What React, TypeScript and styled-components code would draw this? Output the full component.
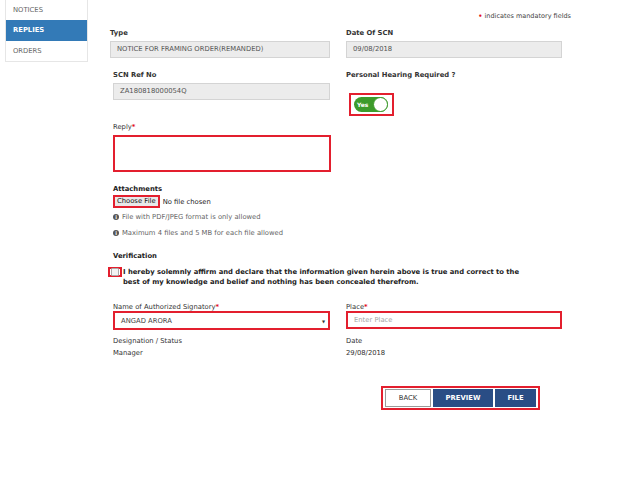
import React from 'react';
import styled, { createGlobalStyle } from 'styled-components';

const GlobalStyle = createGlobalStyle`
  html, body {
    margin: 0;
    padding: 0;
    background: #fff;
  }
  body {
    font-family: "DejaVu Sans", Verdana, sans-serif;
    font-size: 6.8px;
    color: #333;
  }
`;

const Page = styled.div`
  display: flex;
  align-items: flex-start;
  padding-left: 5px;
  width: 627px;
  height: 496px;
  box-sizing: border-box;
`;

/* menu on the left side */
const SideNav = styled.nav`
  width: 81px;
  border: 1px solid #e6e6e6;
  border-top: none;
  display: flex;
  flex-direction: column;
`;

const NavItem = styled.div<{ $active?: boolean }>`
  height: 20.3px;
  line-height: 20.3px;
  padding-left: 7px;
  font-size: 6.8px;
  color: ${p => (p.$active ? '#fff' : '#666')};
  background: ${p => (p.$active ? '#337ab7' : '#fff')};
  font-weight: ${p => (p.$active ? 'bold' : 'normal')};
`;

const Form = styled.form`
  margin-left: 22px;
  width: 461px;
  display: flex;
  flex-direction: column;
`;

const Note = styled.div`
  margin-top: 12px;
  height: 8px;
  text-align: right;
  font-size: 6.5px;
  color: #444;
  line-height: 8px;
`;

const Star = styled.span`
  color: #e3101e;
  font-weight: bold;
`;

const Row = styled.div<{ $top: number }>`
  display: grid;
  grid-template-columns: 220px 216px;
  column-gap: 16px;
  margin-top: ${p => p.$top}px;
`;

const Field = styled.div<{ $shift?: number }>`
  display: flex;
  flex-direction: column;
  margin-left: ${p => p.$shift || 0}px;
`;

const Label = styled.label<{ $bold?: boolean; $gap?: number }>`
  display: block;
  height: 8px;
  line-height: 8px;
  font-weight: ${p => (p.$bold ? 'bold' : 'normal')};
  color: #333;
  margin-bottom: ${p => (p.$gap ?? 4)}px;
`;

const ReadOnly = styled.div`
  height: 17px;
  box-sizing: border-box;
  border: 1px solid #d4d4d4;
  background: #ececec;
  color: #555;
  padding-left: 6px;
  line-height: 15px;
`;

const Highlight = styled.div<{ $h: number }>`
  height: ${p => p.$h}px;
  box-sizing: border-box;
  border: 2px solid #e31f2e;
  background: #fff;
  display: flex;
  align-items: center;
  padding-left: 6px;
  position: relative;
  color: #444;
`;

const Placeholder = styled.span`
  color: #a5a5a5;
`;

const Caret = styled.span`
  position: absolute;
  right: 3px;
  top: 6px;
  font-size: 4px;
  color: #333;
`;

const ToggleFrame = styled.div`
  margin-top: 10px;
  margin-left: 3px;
  width: 45px;
  height: 23px;
  box-sizing: border-box;
  border: 2px solid #e31f2e;
  display: flex;
  align-items: center;
  padding-left: 3px;
`;

const Toggle = styled.div`
  width: 34px;
  height: 15px;
  border-radius: 8px;
  background: #3d9b2b;
  display: flex;
  align-items: center;
  justify-content: space-between;
  padding-left: 3px;
  box-sizing: border-box;
  color: #fff;
  font-weight: bold;
  font-size: 6px;
`;

const Knob = styled.span`
  width: 13px;
  height: 13px;
  border-radius: 50%;
  background: #fff;
  border: 1px solid #3d9b2b;
`;

const Section = styled.div<{ $top: number; $shift?: number }>`
  margin-top: ${p => p.$top}px;
  margin-left: ${p => p.$shift || 0}px;
`;

const SectionTitle = styled.div`
  font-weight: bold;
  height: 8px;
  line-height: 8px;
  color: #222;
`;

const FileRow = styled.div`
  display: flex;
  align-items: center;
  margin-top: 2px;
  gap: 3px;
  color: #222;
`;

const FileButton = styled.span`
  height: 13px;
  box-sizing: border-box;
  border: 2px solid #e31f2e;
  background: #e9e9e9;
  padding: 0 2px;
  line-height: 9px;
  color: #111;
`;

const Hint = styled.div<{ $top: number }>`
  display: flex;
  align-items: center;
  gap: 3px;
  margin-top: ${p => p.$top}px;
  color: #666;
  height: 8px;
`;

const InfoDot = styled.span`
  width: 6px;
  height: 6px;
  border-radius: 50%;
  background: #555;
  color: #fff;
  font-size: 5px;
  font-weight: bold;
  line-height: 6px;
  text-align: center;
`;

const Declaration = styled.div`
  display: flex;
  align-items: flex-start;
  margin-top: 7px;
  margin-left: -5px;
`;

const CheckFrame = styled.span`
  width: 14px;
  height: 10px;
  box-sizing: border-box;
  border: 2px solid #e31f2e;
  display: flex;
  align-items: center;
  justify-content: center;
  flex: none;
`;

const CheckBox = styled.span`
  width: 6px;
  height: 6px;
  border: 1px solid #aaa;
  background: #f3f3f3;
  border-radius: 1px;
`;

const DeclText = styled.p`
  margin: 0 0 0 1px;
  font-weight: bold;
  line-height: 10px;
  color: #222;
  width: 412px;
`;

const Plain = styled.div<{ $top: number }>`
  height: 8px;
  line-height: 8px;
  margin-top: ${p => p.$top}px;
  color: #333;
`;

const Actions = styled.div`
  align-self: flex-start;
  margin-top: 29px;
  margin-left: 271px;
  height: 24px;
  box-sizing: border-box;
  border: 2px solid #e31f2e;
  display: flex;
  align-items: center;
  gap: 2px;
  padding: 0 2px;
`;

const ActionButton = styled.button<{ $primary?: boolean; $w: number }>`
  width: ${p => p.$w}px;
  height: 18px;
  box-sizing: border-box;
  padding: 0;
  font-family: "DejaVu Sans", Verdana, sans-serif;
  font-size: 6.8px;
  font-weight: ${p => (p.$primary ? 'bold' : 'normal')};
  color: ${p => (p.$primary ? '#fff' : '#333')};
  background: ${p => (p.$primary ? '#2a4d85' : '#fff')};
  border: 1px solid ${p => (p.$primary ? '#2a4d85' : '#9a9a9a')};
  text-transform: uppercase;
`;

const App: React.FC = () => {
  return (
    <>
      <GlobalStyle />
      <Page>
        <SideNav>
          <NavItem>NOTICES</NavItem>
          <NavItem $active>REPLIES</NavItem>
          <NavItem>ORDERS</NavItem>
        </SideNav>

        <Form>
          <Note>
            <Star>•</Star> indicates mandatory fields
          </Note>

          <Row $top={9}>
            <Field>
              <Label $bold>Type</Label>
              <ReadOnly>NOTICE FOR FRAMING ORDER(REMANDED)</ReadOnly>
            </Field>
            <Field>
              <Label $bold>Date Of SCN</Label>
              <ReadOnly>09/08/2018</ReadOnly>
            </Field>
          </Row>

          <Row $top={13}>
            <Field $shift={3}>
              <Label $bold>SCN Ref No</Label>
              <ReadOnly>ZA180818000054Q</ReadOnly>
            </Field>
            <Field>
              <Label $bold>Personal Hearing Required ?</Label>
              <ToggleFrame>
                <Toggle>
                  Yes
                  <Knob />
                </Toggle>
              </ToggleFrame>
            </Field>
          </Row>

          <Section $top={7} $shift={3}>
            <Label>
              Reply<Star>*</Star>
            </Label>
            <Highlight $h={37} style={{ width: 218 }} />
          </Section>

          <Section $top={13} $shift={3}>
            <SectionTitle>Attachments</SectionTitle>
            <FileRow>
              <FileButton>Choose File</FileButton>
              No file chosen
            </FileRow>
            <Hint $top={5}>
              <InfoDot>i</InfoDot>
              File with PDF/JPEG format is only allowed
            </Hint>
            <Hint $top={8}>
              <InfoDot>i</InfoDot>
              Maximum 4 files and 5 MB for each file allowed
            </Hint>
          </Section>

          <Section $top={15} $shift={3}>
            <SectionTitle>Verification</SectionTitle>
            <Declaration>
              <CheckFrame>
                <CheckBox />
              </CheckFrame>
              <DeclText>
                I hereby solemnly affirm and declare that the information given herein above is true and correct to the
                best of my knowledge and belief and nothing has been concealed therefrom.
              </DeclText>
            </Declaration>
          </Section>

          <Row $top={16}>
            <Field $shift={3}>
              <Label $gap={0}>
                Name of Authorized Signatory<Star>*</Star>
              </Label>
              <Highlight $h={19}>
                ANGAD ARORA
                <Caret>▼</Caret>
              </Highlight>
              <Plain $top={7}>Designation / Status</Plain>
              <Plain $top={4}>Manager</Plain>
            </Field>
            <Field>
              <Label $gap={0}>
                Place<Star>*</Star>
              </Label>
              <Highlight $h={18}>
                <Placeholder>Enter Place</Placeholder>
              </Highlight>
              <Plain $top={8}>Date</Plain>
              <Plain $top={4}>29/08/2018</Plain>
            </Field>
          </Row>

          <Actions>
            <ActionButton $w={46}>Back</ActionButton>
            <ActionButton $primary $w={60}>Preview</ActionButton>
            <ActionButton $primary $w={41}>File</ActionButton>
          </Actions>
        </Form>
      </Page>
    </>
  );
};

export default App;
